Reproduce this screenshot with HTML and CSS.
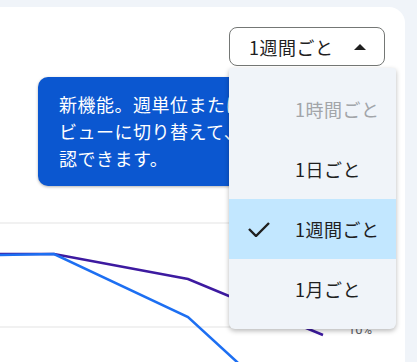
FILE: index.html
```html
<!DOCTYPE html>
<html lang="ja">
<head>
  <meta charset="UTF-8" />
  <title>グラフ</title>
  <meta name="viewport" content="width=device-width, initial-scale=1.0"/>
  <link rel="stylesheet" href="styles.css">
</head>
<body>

<div class="card">
  <div class="toolbar">
    <div class="select">
      <button class="select-btn">
        <span>1週間ごと</span>
        <svg class="caret" width="12" height="6" viewBox="0 0 12 6"><path d="M0 6 L6 0 L12 6 Z" fill="#1f1f1f"/></svg>
      </button>
      <ul class="menu">
        <li class="item disabled">1時間ごと</li>
        <li class="item">1日ごと</li>
        <li class="item selected">
          <svg class="check" width="22" height="16" viewBox="0 0 22 16"><path d="M1 8 L8 15 L21 2" fill="none" stroke="#1f1f1f" stroke-width="2.4"/></svg>
          1週間ごと
        </li>
        <li class="item">1月ごと</li>
      </ul>
    </div>
  </div>

  <div class="tip">
    新機能。週単位または月単位の<br>
    ビューに切り替えて、傾向を確<br>
    認できます。
  </div>

  <svg class="chart" width="405" height="296" viewBox="0 0 405 296">
    <line x1="0" y1="157" x2="335" y2="157" stroke="#e3e3e3" stroke-width="1"/>
    <line x1="0" y1="261" x2="335" y2="261" stroke="#e3e3e3" stroke-width="1"/>
    <polyline points="0,188 54,188 188,213 323,269" fill="none" stroke="#3d1aa0" stroke-width="2.5"/>
    <polyline points="0,189 54,188 188,251 237,296 250,308" fill="none" stroke="#1d6ff2" stroke-width="2.5"/>
    <text x="348" y="268" class="axis">10%</text>
  </svg>
</div>

</body>
</html>
```

FILE: styles.css
```css
body { margin: 0; background: #f0f4f9; font-family: "Noto Sans CJK JP", sans-serif; overflow: hidden; }
.card {
  position: relative;
  width: 405px;
  min-height: calc(100vh - 7px);
  margin-top: 7px;
  background: #fff;
  border-top-right-radius: 16px;
}
.toolbar { display: flex; justify-content: flex-end; padding: 20px 20px 0; }
.select { position: relative; z-index: 2; }
.select-btn {
  box-sizing: border-box;
  display: flex;
  align-items: center;
  justify-content: space-between;
  width: 156px;
  height: 39px;
  padding: 0 18px 0 19px;
  border: 1px solid #747775;
  border-radius: 8px;
  background: #fff;
  color: #1f1f1f;
  font-family: inherit;
  font-size: 18px;
  letter-spacing: 0.5px;
}
.caret { margin-top: 1px; }
.menu {
  position: absolute;
  top: calc(100% + 2px);
  left: 0;
  width: 167px;
  margin: 0;
  padding: 11px 0 10px;
  list-style: none;
  background: #f0f4f9;
  border-radius: 3px 3px 6px 6px;
  box-shadow: 0 2px 5px rgba(0, 0, 0, 0.28);
}
.item {
  position: relative;
  height: 60px;
  display: flex;
  align-items: center;
  padding-left: 66px;
  font-size: 18px;
  letter-spacing: 0.5px;
  color: #1f1f1f;
}
.item.disabled { color: #a2a5a9; }
.item.selected { background: #c2e7ff; }
.check { position: absolute; left: 19px; top: 22px; }
.tip {
  position: absolute;
  top: 70px;
  left: 38px;
  width: 280px;
  padding: 14px 21px;
  background: #0b57d0;
  color: #fff;
  font-size: 18px;
  letter-spacing: 0.5px;
  line-height: 27px;
  border-radius: 10px;
  box-shadow: 0 1px 3px rgba(0, 0, 0, 0.3);
}
.chart { display: block; overflow: hidden; }
.axis { font-size: 13px; fill: #5f6368; font-family: Roboto, sans-serif; }
```
